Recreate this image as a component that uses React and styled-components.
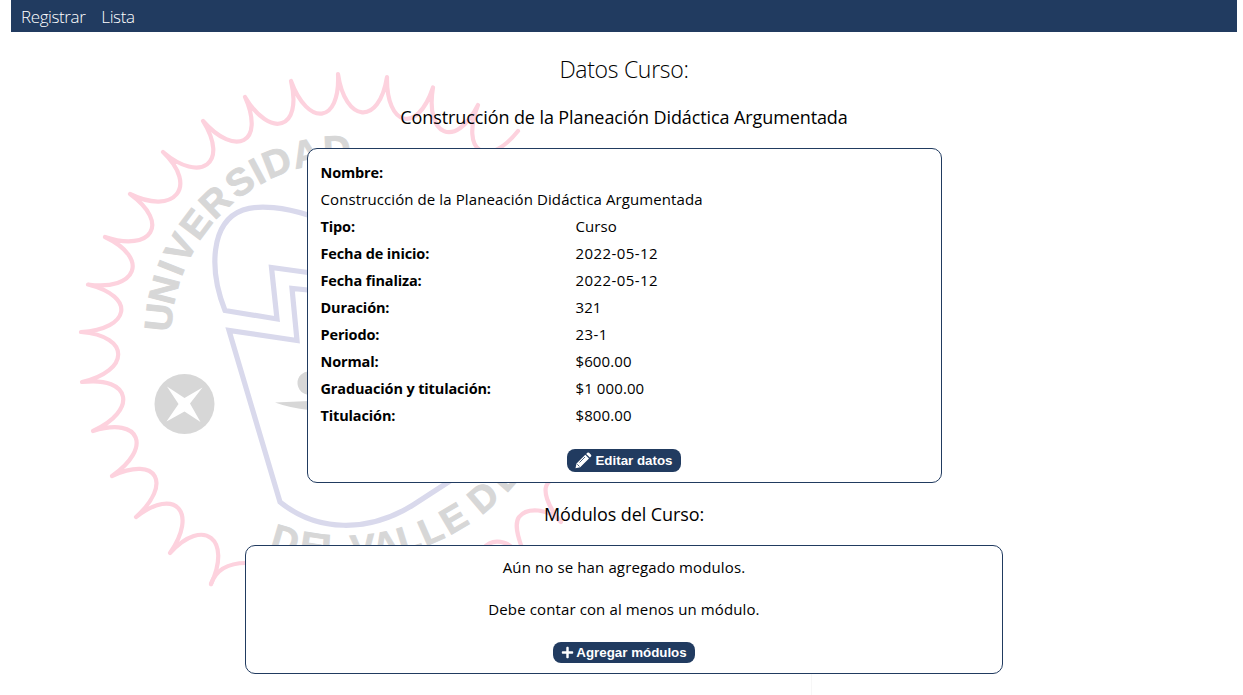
import React from 'react';
import styled, { createGlobalStyle } from 'styled-components';
import { FaPlus } from 'react-icons/fa';

const NAVY = '#213b60';

const GlobalStyle = createGlobalStyle`
  * { box-sizing: border-box; }
  body {
    margin: 0;
    background: #fff;
    color: #000;
    font-family: 'Open Sans', 'Noto Sans', sans-serif;
    overflow: hidden;
  }
`;

const Page = styled.div`
  position: relative;
  height: 695px;
  padding: 0 6px 0 11px;
`;

const Watermark = styled.svg`
  position: absolute;
  left: 0;
  top: 0;
  pointer-events: none;
`;

const NavBar = styled.nav`
  position: relative;
  display: flex;
  align-items: center;
  gap: 16px;
  height: 32px;
  padding: 1px 10px 0;
  background: ${NAVY};
`;

const NavLink = styled.a`
  color: #fff;
  font-size: 17px;
  line-height: 24px;
  font-weight: 300;
  letter-spacing: -0.4px;
  white-space: nowrap;
`;

const Main = styled.main`
  position: relative;
  display: flex;
  flex-direction: column;
  align-items: center;
`;

const Title = styled.h1`
  margin: 21px 0 0;
  font-size: 23px;
  line-height: 32px;
  font-weight: 300;
  letter-spacing: -0.3px;
`;

const Subtitle = styled.h2`
  margin: ${(p) => p.$margin};
  font-size: 18px;
  line-height: 28px;
  font-weight: 400;
  letter-spacing: -0.1px;
  white-space: nowrap;
`;

const Card = styled.section`
  display: flex;
  flex-direction: column;
  align-items: center;
  width: ${(p) => p.$width}px;
  height: ${(p) => p.$height}px;
  padding: ${(p) => p.$padding};
  border: 1px solid ${NAVY};
  border-radius: 10px;
  background: #fff;
`;

const Details = styled.dl`
  display: grid;
  grid-template-columns: 255px 1fr;
  grid-auto-rows: 27px;
  width: 100%;
  margin: 0 0 20px;
  font-size: 15px;
  line-height: 27px;
  white-space: nowrap;
`;

const Label = styled.dt`
  grid-column: ${(p) => (p.$wide ? '1 / -1' : 'auto')};
  font-weight: 700;
  font-size: 14.5px;
  letter-spacing: -0.14px;
`;

const Value = styled.dd`
  grid-column: ${(p) => (p.$wide ? '1 / -1' : 'auto')};
  margin: 0;
  letter-spacing: ${(p) => p.$spacing ?? 0.1}px;
`;

const Notice = styled.p`
  margin: 0 0 ${(p) => p.$after}px;
  font-size: 15px;
  line-height: 24px;
  letter-spacing: 0.12px;
`;

const Button = styled.button`
  display: flex;
  align-items: center;
  justify-content: center;
  gap: ${(p) => p.$gap}px;
  width: ${(p) => p.$width}px;
  height: ${(p) => p.$height}px;
  padding: 0;
  border: 0;
  border-radius: 8px;
  background: ${NAVY};
  color: #fff;
  font: 700 13.33px 'Liberation Sans', Arial, sans-serif;
  white-space: nowrap;
`;

const tips = [
  [211, 584], [170, 553], [136, 517], [112, 476], [93, 431], [82, 382], [81, 332],
  [88, 284.5], [105, 237], [130, 194], [163, 152], [203, 121], [245, 97], [291, 81],
  [338, 74], [387, 77], [433, 87.5], [478, 105], [518, 131],
];

function scallops(points) {
  let d = `M${points[0]}`;
  for (let i = 1; i < points.length; i += 1) {
    const [ax, ay] = points[i - 1];
    const [bx, by] = points[i];
    const len = Math.hypot(bx - ax, by - ay);
    const tx = (bx - ax) / len;
    const ty = (by - ay) / len;
    const c1 = [ax - ty * 48 + tx * 10, ay + tx * 48 + ty * 10];
    const c2 = [bx - ty * 50 - tx * 5, by + tx * 50 - ty * 5];
    d += ` C${c1} ${c2} ${bx} ${by}`;
  }
  return d;
}

// [letter, angle from the vertical in degrees]
const upperLetters = [
  ['U', -84], ['N', -75.4], ['I', -68.4], ['V', -61.7], ['E', -53.1], ['R', -44],
  ['S', -34.4], ['I', -28.2], ['D', -21.6], ['A', -12.3], ['D', -2.8],
];
const lowerLetters = [
  ['D', -16.2], ['E', -8.8], ['L', -3.4], ['V', 4.8], ['A', 11], ['L', 17.4],
  ['L', 23.7], ['E', 30.6], ['D', 40.4], ['E', 48.6],
];

function Lettering() {
  return (
    <g
      fontFamily="'Liberation Sans', Arial, sans-serif"
      fontWeight="700"
      textAnchor="middle"
      stroke="#d7d7d7"
      strokeWidth=".9"
    >
      {upperLetters.map(([letter, angle], i) => (
        <text
          key={i}
          fontSize="38"
          transform={`translate(346 337) rotate(${angle}) translate(0 -175)`}
        >
          {letter}
        </text>
      ))}
      {lowerLetters.map(([letter, angle], i) => (
        <text
          key={i}
          fontSize="37"
          transform={`translate(345 335) rotate(${-angle}) translate(0 226)`}
        >
          {letter}
        </text>
      ))}
    </g>
  );
}

function Seal() {
  return (
    <Watermark width="1243" height="695" viewBox="0 0 1243 695" fill="none" aria-hidden="true">
      <g stroke="#fdd2de" strokeWidth="4.2" strokeLinecap="round" strokeLinejoin="round">
        <path d={scallops(tips)} />
        <path d="M211 584C216 570 228 563 246 563" />
        <path d="M549 482C541 489 548 507 561 522C548 508 527 507 519 517C514 524 518 537 522 548" />
        <path d="M484 548C490 540 503 539 513 548" />
      </g>
      <g stroke="#d9d9ec" strokeWidth="5.2">
        <path d="M308 215C286 208 260 204 243 210C210 222 209 270 225 310.500L277 319L271.500 267.500L308 272.500" />
        <path d="M308 290L292 288.500L297 340.500L229 330.500L280 502C317 532 368 533 413 505L450 481" />
      </g>
      <g fill="#d7d7d7">
        <Lettering />
        <circle cx="184.500" cy="404" r="30" />
        <circle cx="309" cy="383" r="11.500" />
        <path d="M275 402.500L309 401V410Q290 408 275 402.500Z" />
      </g>
      <path fill="#fff" d="M167 386.500L184.500 398L202.500 387.500L190 403.500L200.500 422L184.500 411.500L166.500 421.500L178.500 404Z" />
      <path stroke="#f7f7f7" d="M811.500 674V695" />
    </Watermark>
  );
}

function Pencil() {
  return (
    <svg width="17" height="17" viewBox="0 0 17 17" aria-hidden="true">
      <path fill="#fff" d="M.5 16.300L1.500 11.500L10.300 2.700L14 6.400L5.200 15.200ZM11.200 1.900L12.300.8Q13.200 0 14.100.8L16 2.700Q16.700 3.600 16 4.500L14.900 5.600Z" />
      <path fill="none" stroke={NAVY} strokeWidth=".8" d="M4.500 10.500L10 5M2.300 12.300L4.500 14.500" />
    </svg>
  );
}

const course = [
  ['Tipo:', 'Curso'],
  ['Fecha de inicio:', '2022-05-12', 0.43],
  ['Fecha finaliza:', '2022-05-12', 0.43],
  ['Duración:', '321'],
  ['Periodo:', '23-1', 0.43],
  ['Normal:', '$600.00'],
  ['Graduación y titulación:', '$1 000.00'],
  ['Titulación:', '$800.00'],
];

const courseName = 'Construcción de la Planeación Didáctica Argumentada';

export default function App() {
  return (
    <Page>
      <GlobalStyle />
      <Seal />
      <NavBar>
        <NavLink>Registrar</NavLink>
        <NavLink>Lista</NavLink>
      </NavBar>
      <Main>
        <Title>Datos Curso:</Title>
        <Subtitle $margin="18px 0 17px">{courseName}</Subtitle>
        <Card $width={635} $height={335} $padding="10px 13px 0">
          <Details>
            <Label $wide>Nombre:</Label>
            <Value $wide>{courseName}</Value>
            {course.map(([label, value, spacing]) => (
              <React.Fragment key={label}>
                <Label>{label}</Label>
                <Value $spacing={spacing}>{value}</Value>
              </React.Fragment>
            ))}
          </Details>
          <Button $width={114} $height={23} $gap={3}>
            <Pencil />
            Editar datos
          </Button>
        </Card>
        <Subtitle $margin="17px 0 17px">Módulos del Curso:</Subtitle>
        <Card $width={758} $height={129} $padding="9px 0 0">
          <Notice $after={18}>Aún no se han agregado modulos.</Notice>
          <Notice $after={21}>Debe contar con al menos un módulo.</Notice>
          <Button $width={142} $height={21} $gap={2}>
            <FaPlus size={13} />
            Agregar módulos
          </Button>
        </Card>
      </Main>
    </Page>
  );
}
